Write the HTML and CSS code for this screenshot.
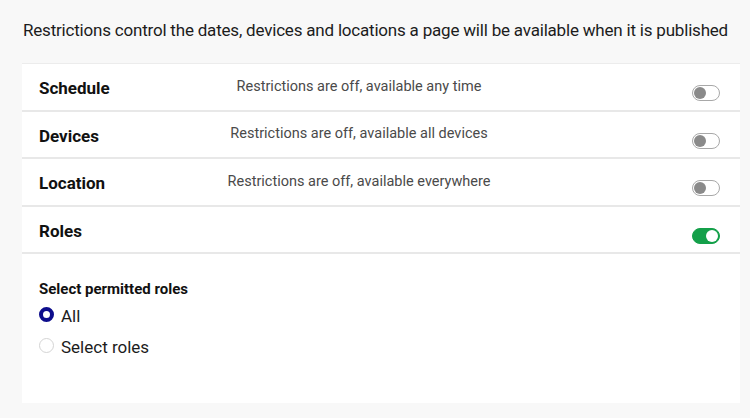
FILE: index.html
```html
<!DOCTYPE html>
<html lang="en">
<head>
<meta charset="utf-8">
<link rel="stylesheet" href="styles.css">
</head>
<body>
<p class="intro">Restrictions control the dates, devices and locations a page will be available when it is published</p>
<section class="panel">
  <div class="row">
    <span class="label">Schedule</span>
    <span class="desc">Restrictions are off, available any time</span>
    <span class="toggle"><span class="knob"></span></span>
  </div>
  <div class="row">
    <span class="label">Devices</span>
    <span class="desc">Restrictions are off, available all devices</span>
    <span class="toggle"><span class="knob"></span></span>
  </div>
  <div class="row">
    <span class="label">Location</span>
    <span class="desc">Restrictions are off, available everywhere</span>
    <span class="toggle"><span class="knob"></span></span>
  </div>
  <div class="row">
    <span class="label">Roles</span>
    <span class="desc"></span>
    <span class="toggle on"><span class="knob"></span></span>
  </div>
  <div class="roles">
    <div class="roles-title">Select permitted roles</div>
    <label class="radio"><span class="dot checked"></span><span>All</span></label>
    <label class="radio"><span class="dot"></span><span>Select roles</span></label>
  </div>
</section>
</body>
</html>
```
FILE: styles.css
```css
html, body {
  margin: 0;
  padding: 0;
  background: #f8f8f8;
}
body {
  font-family: Roboto, "Liberation Sans", sans-serif;
  color: #1c1c1c;
  padding: 0 10px 0 22px;
  height: 418px;
  overflow: hidden;
}
.intro {
  margin: 0;
  padding: 20px 0 0 1px;
  height: 63px;
  box-sizing: border-box;
  font-size: 17px;
  letter-spacing: -0.2px;
  white-space: nowrap;
}
.panel {
  background: #fff;
  border-top: 1px solid #ececec;
  height: 340px;
  box-sizing: border-box;
}
.row {
  display: grid;
  grid-template-columns: 150px 340px 1fr;
  align-items: center;
  height: 47.5px;
  padding: 0 20px 0 17px;
  border-bottom: 2px solid #e8e8e8;
  box-sizing: border-box;
}
.label {
  font-size: 17px;
  font-weight: 700;
  color: #111;
  padding-top: 3px;
}
.desc {
  text-align: center;
  font-size: 14.5px;
  color: #4a4a4a;
  padding-bottom: 1px;
}
.toggle {
  justify-self: end;
  width: 28px;
  height: 16px;
  border: 1px solid #a8a8a8;
  border-radius: 9px;
  background: #fff;
  position: relative;
  margin-top: 13px;
  box-sizing: border-box;
}
.toggle .knob {
  position: absolute;
  left: 1px;
  top: 1px;
  width: 12px;
  height: 12px;
  border-radius: 50%;
  background: #8a8a8a;
}
.toggle.on {
  background: #14a04a;
  border-color: #14a04a;
}
.toggle.on .knob {
  left: 13px;
  background: #fff;
}
.roles {
  padding: 26px 17px 0;
}
.roles-title {
  font-size: 15px;
  font-weight: 700;
  color: #111;
  margin-bottom: 8px;
}
.radio {
  display: flex;
  align-items: flex-start;
  gap: 7px;
  font-size: 17px;
  color: #1c1c1c;
  height: 31px;
}
.dot {
  width: 15px;
  height: 15px;
  border-radius: 50%;
  border: 1px solid #d4d4d4;
  box-sizing: border-box;
  margin-top: 1px;
}
.dot.checked {
  border: 4.5px solid #0d0d8c;
  background: #fff;
}
```
